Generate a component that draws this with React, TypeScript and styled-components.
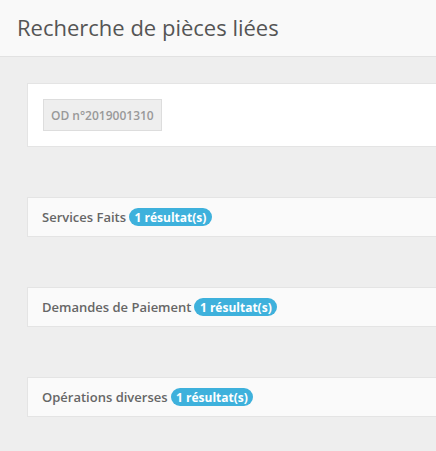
import React from "react";
import styled, { createGlobalStyle } from "styled-components";

const Global = createGlobalStyle`
  html, body { margin: 0; padding: 0; background: #eeeeee; overflow: hidden; }
  body { font-family: "Open Sans", "DejaVu Sans", sans-serif; }
`;

const Page = styled.div`
  width: 100%;
  min-height: 451px;
  background: #eeeeee;
  overflow: hidden;
`;

const Header = styled.header`
  height: 57px;
  box-sizing: border-box;
  background: #f9f9f9;
  border-bottom: 1px solid #e2e2e2;
  padding: 0 17px;
  display: flex;
  align-items: center;
`;

const Title = styled.h1`
  margin: 0;
  font-size: 22px;
  font-weight: 400;
  color: #555555;
  line-height: 1;
  padding-bottom: 2px;
`;

const Content = styled.main`
  padding: 26px 0 30px 27px;
  display: flex;
  flex-direction: column;
  gap: 50px;
`;

const Card = styled.section`
  margin-right: -20px;
  background: #ffffff;
  border: 1px solid #e4e4e4;
  padding: 15px;
  box-sizing: border-box;
  height: 64px;
`;

const Tag = styled.span`
  display: inline-flex;
  align-items: center;
  height: 32px;
  box-sizing: border-box;
  padding: 0 7px;
  background: #eeeeee;
  border: 1px solid #dddddd;
  color: #999999;
  font-size: 12px;
  font-weight: 600;
`;

const Panel = styled.section`
  margin-right: -20px;
  height: 40px;
  box-sizing: border-box;
  background: #fafafa;
  border: 1px solid #e4e4e4;
  padding: 0 14px;
  display: flex;
  align-items: center;
  gap: 3px;
`;

const Label = styled.span`
  font-size: 13px;
  font-weight: 600;
  color: #666666;
`;

const Badge = styled.span`
  display: inline-flex;
  align-items: center;
  height: 18px;
  padding: 0 5.5px;
  border-radius: 9px;
  background: #3eb1dc;
  color: #ffffff;
  font-size: 12px;
  font-weight: 700;
`;

const sections = ["Services Faits", "Demandes de Paiement", "Opérations diverses"];

export default function App() {
  return (
    <Page>
      <Global />
      <Header>
        <Title>Recherche de pièces liées</Title>
      </Header>
      <Content>
        <Card>
          <Tag>OD n°2019001310</Tag>
        </Card>
        {sections.map((s) => (
          <Panel key={s}>
            <Label>{s}</Label>
            <Badge>1 résultat(s)</Badge>
          </Panel>
        ))}
      </Content>
    </Page>
  );
}
